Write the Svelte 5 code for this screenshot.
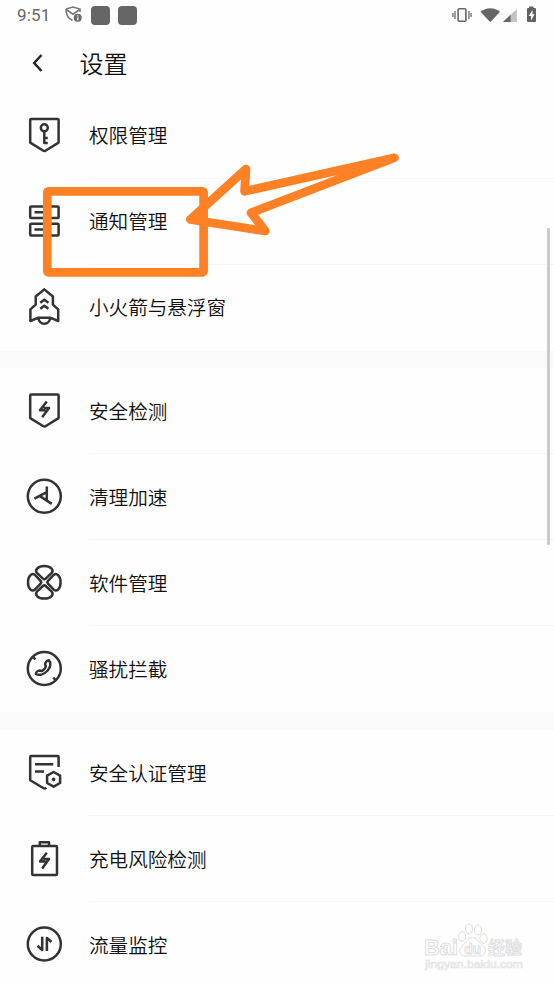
<script>
  const groups = [
    [['key', '权限管理'], ['list', '通知管理'], ['rocket', '小火箭与悬浮窗']],
    [['shield', '安全检测'], ['speed', '清理加速'], ['clover', '软件管理'], ['phone', '骚扰拦截']],
    [['cert', '安全认证管理'], ['battery', '充电风险检测'], ['traffic', '流量监控']]
  ];
</script>

{#snippet bolt()}
  <path d="M22.8 10.5 16 19.3H21.6M19.5 16.9H25L18.2 26.2" />
{/snippet}

{#snippet icon(name)}
  <svg class="icon" width="40" height="40" viewBox="0 0 40 40">
    {#if name === 'key'}
      <path d="M7.2 3H33.6Q34.6 3 34.6 4V26.6L21.4 34.7Q20.4 35.3 19.4 34.7L6.2 26.6V4Q6.2 3 7.2 3Z" />
      <circle cx="20.3" cy="11.8" r="3.5" />
      <path d="M20.3 15.3V27H23.8M20.3 21.9H23.8" />
    {:else if name === 'list'}
      <rect x="6.2" y="4.4" width="28.4" height="11.6" rx="1" />
      <rect x="6.2" y="21.8" width="28.4" height="11.6" rx="1" />
      <path d="M10.5 10.2H21M10.5 27.6H21" />
    {:else if name === 'rocket'}
      <path d="M20.3 1.4 11.7 8.5V16.6L6.4 21.4V33L13.8 29.8H26.8L34.2 33V21.4L28.9 16.6V8.5ZM14.4 30.2C15.3 37.6 25.3 37.6 26.2 30.2" />
      <path d="M16.2 14.8 20.3 11.8 24.4 14.8M16.2 20.8 20.3 17.8 24.4 20.8" />
    {:else if name === 'shield'}
      <path d="M7.2 3.4H33.6Q34.6 3.4 34.6 4.4V27.1L21.4 35.2Q20.4 35.8 19.4 35.2L6.2 27.1V4.4Q6.2 3.4 7.2 3.4Z" />
      {@render bolt()}
    {:else if name === 'speed'}
      <circle cx="20.3" cy="19.3" r="16.5" />
      <path d="M22.8 9.5V24.5M10.4 21.6 22.8 15.2M15.6 18.9 27.8 26.9" />
    {:else if name === 'clover'}
      {#each [0, 90, 180, 270] as turn}
        <path transform="rotate({turn} 20.3 19.3)" d="M18.9 15.6 12.9 9.9C10.5 6.8 13.8 3 20.3 3S30.1 6.8 27.7 9.9L21.7 15.6Q20.3 16.8 18.9 15.6Z" />
      {/each}
    {:else if name === 'phone'}
      <circle cx="20.3" cy="19.5" r="16.5" />
      <path d="M24.8 11.2C27.3 13.8 26.6 18.2 23.7 21.5 19.7 25.8 15 26.6 11.8 24.8 12 23 14.3 21.6 16.2 21.6L17.8 22.1C20.2 20.7 21.7 18.8 21.8 17L21 15.3C21.2 13.4 23 11.4 24.8 11.2ZM9.3 8.3 11.5 10.4M29.3 28.7 31.5 31" />
    {:else if name === 'cert'}
      <path d="M34.6 14V3.9Q34.6 2.9 33.6 2.9H7.2Q6.2 2.9 6.2 3.9V27.2L19.6 35.2Q20.8 35.9 22.4 34.8M11 11.2H29.3M11 18.4H20" />
      <path d="M29.6 19 36.1 22.6V30L29.6 33.7 23.1 30V22.6Z" />
      <circle class="dot" cx="29.6" cy="26.4" r="1.8" />
    {:else if name === 'battery'}
      <rect x="8.2" y="7.1" width="24.8" height="29" rx="1" />
      <path d="M15.8 7V3.2H25V7" />
      <g transform="translate(0 3.2)">{@render bolt()}</g>
    {:else}
      <circle cx="20.3" cy="19" r="16.5" />
      <path d="M18.2 11.8V25L13.5 20.8M22.9 26V12.9L27.5 17" />
    {/if}
  </svg>
{/snippet}

<main>
  <div class="status">
    <span class="clock">9:51</span>
    <svg class="vpn" width="18" height="18" viewBox="0 0 18 18">
      <path d="M1 3 8 1 15 3V6M1 3C1 9 3 12.5 7.5 14.5M2 4 8 8.2 14 4" />
      <circle cx="12.7" cy="11.7" r="4" />
      <path class="mark" d="M12.8 9.2V10.4M12.8 11.4V14.2" />
    </svg>
    <i class="app"></i>
    <i class="app"></i>
    <svg class="signals" width="90" height="20" viewBox="0 0 90 20">
      <rect x="8.1" y="3.7" width="7.8" height="12.6" rx="1" fill="none" stroke="#666" stroke-width="1.6" />
      <path d="M5 6V14M2.9 8V12M19 6V14M21.1 8V12" stroke="#777" stroke-width="1.4" />
      <path d="M30.5 6.8C36 2 44.5 2 50 6.8L40.3 17.3Z" fill="#666" />
      <path d="M66.8 4V17H53Z" fill="#c3c3c3" />
      <path d="M60.6 9.8V17H53Z" fill="#666" />
      <path d="M79 3V1.5H83.5V3H85Q86 3 86 4V16Q86 17 85 17H78Q77 17 77 16V4Q77 3 78 3Z" fill="#626262" />
      <path d="M82.5 5 78.7 11H81V15.5L84.6 9.3H82.5Z" fill="#fff" />
    </svg>
  </div>
  <header>
    <svg width="14" height="22" viewBox="0 0 14 22"><path d="M10.5 3 3.2 11 10.5 19" /></svg>
    <h1>设置</h1>
  </header>

  {#each groups as rows}
    <section>
      {#each rows as [name, label]}
        <div class="row">
          {@render icon(name)}
          <div class="label">{label}</div>
        </div>
      {/each}
    </section>
  {/each}

  <div class="scrollbar"></div>

  <svg class="annotation" width="554" height="300" viewBox="0 0 554 300">
    <rect x="47.3" y="191.3" width="156.3" height="81" rx="1" />
    <path d="M190.3 219.5 246 169 244.5 191.3 394.5 157.8 251 212.8 265.3 231Z" />
  </svg>

  <svg class="watermark" width="110" height="54" viewBox="0 0 110 54">
    <g class="outline">
      <text x="3" y="35" font-size="22" textLength="34" lengthAdjust="spacingAndGlyphs">Bai</text>
      <ellipse cx="41" cy="16.5" rx="3.6" ry="4.8" />
      <ellipse cx="48" cy="9" rx="3.6" ry="5" />
      <ellipse cx="57" cy="10" rx="3.6" ry="5" />
      <ellipse cx="62.5" cy="18.5" rx="3.6" ry="4.8" />
      <path d="M51.5 17.5C56 17.5 58 23 61.5 25.5 66 29 65 36 59 36H44C38 36 37 29 41.5 25.5 45 23 47 17.5 51.5 17.5Z" />
      <text x="43" y="33.5" font-size="15" textLength="17" lengthAdjust="spacingAndGlyphs">du</text>
      <text x="67" y="34" font-size="17.5" textLength="34" lengthAdjust="spacingAndGlyphs">经验</text>
    </g>
    <text class="url" x="4" y="47.5" font-size="11" textLength="98" lengthAdjust="spacingAndGlyphs">jingyan.baidu.com</text>
  </svg>
</main>

<style>
  :global(body) { background: #fefefe; }
  main {
    position: relative;
    width: 554px;
    height: 984px;
    overflow: hidden;
    background: #fefefe;
    color: #111;
    font-family: "Noto Sans CJK SC", sans-serif;
    font-weight: 350;
  }
  .status { display: flex; align-items: center; height: 30px; padding-left: 17px; }
  .clock { width: 48px; font: 17px/30px Roboto, sans-serif; letter-spacing: 0.2px; color: #666; }
  .vpn { fill: none; stroke: #777; stroke-width: 1.6; margin-right: 8px; }
  .vpn circle { fill: #6b6b6b; stroke: none; }
  .vpn .mark { stroke: #fff; stroke-width: 1.3; }
  .app { width: 19px; height: 19px; border-radius: 4px; background: #666; margin-right: 8px; }
  .signals { margin-left: auto; margin-right: 14px; }
  header { display: flex; align-items: center; height: 63px; padding: 0 0 0 31px; box-sizing: border-box; }
  header svg { fill: none; stroke: #282828; stroke-width: 2.5; margin-top: 3px; }
  h1 { margin: 3px 0 0 34.5px; font-size: 24px; line-height: 36px; font-weight: 350; }
  section + section { border-top: 17px solid #f9f9f9; }
  section:last-of-type { border-top-width: 18px; }
  .row { display: flex; align-items: center; height: 86px; padding-left: 24px; }
  .icon { flex: none; margin-right: 25px; fill: none; stroke: #333; stroke-width: 2.5; stroke-linejoin: round; }
  .icon .dot { fill: #333; stroke: none; }
  .label {
    flex: 1;
    height: 86px;
    box-sizing: border-box;
    font-size: 19.6px;
    line-height: 85px;
    border-bottom: 1px solid #f5f5f5;
  }
  section:first-of-type .label { line-height: 83px; }
  .row:last-child .label { border-bottom: 0; }
  .scrollbar { position: absolute; left: 547px; top: 228px; width: 3px; height: 317px; background: #cbcbcb; border-radius: 1px; }
  .annotation { position: absolute; left: 0; top: 0; fill: none; stroke: #ff8126; stroke-width: 8.7; stroke-linejoin: round; }
  .watermark { position: absolute; left: 421px; top: 920px; font-family: "Liberation Sans", "Noto Sans CJK SC", sans-serif; font-weight: 700; }
  .outline { fill: #fefefe; stroke: #dedede; stroke-width: 1; }
  .url { font-weight: 400; fill: #fdfdfd; stroke: #e4e4e4; stroke-width: 0.7; }
</style>
